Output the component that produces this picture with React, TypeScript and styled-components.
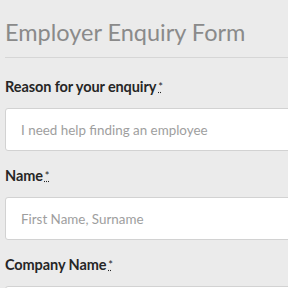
import styled, { createGlobalStyle } from 'styled-components';

const GlobalStyle = createGlobalStyle`
	html, body {
		margin: 0;
		padding: 0;
		background: #ebebeb;
		overflow: hidden;
	}

	body {
		font-family: Lato, "Open Sans", sans-serif;
	}
`;

const FormWrapper = styled.form`
	width: 320px;
	padding: 18px 0 0 5px;
`;

const Title = styled.h2`
	margin: 0;
	padding-bottom: 10px;
	font-size: 23.5px;
	font-weight: 400;
	line-height: 29px;
	color: #8a8a8a;
	border-bottom: 1px solid #d6d6d6;
`;

const Fields = styled.div`
	display: flex;
	flex-direction: column;
	padding-top: 20px;
`;

const Field = styled.div`
	display: flex;
	flex-direction: column;
	gap: 12px;
	margin-bottom: 16px;
`;

const Label = styled.label`
	font-size: 14.5px;
	font-weight: 700;
	line-height: 18px;
	color: #262626;
	letter-spacing: -0.1px;

	abbr {
		margin-left: 2px;
		font-weight: 400;
		font-size: 11px;
		vertical-align: top;
		text-decoration: underline dotted;
		cursor: help;
	}
`;

const Input = styled.input`
	box-sizing: border-box;
	height: 43px;
	width: 100%;
	padding: 0 15px;
	border: 1px solid #d2d2d2;
	border-radius: 3px;
	background: #fff;
	font-family: inherit;
	font-size: 13.4px;
	color: #333;

	&::placeholder {
		color: #9e9e9e;
	}
`;

const fields = [
	{ label: 'Reason for your enquiry', placeholder: 'I need help finding an employee' },
	{ label: 'Name', placeholder: 'First Name, Surname' },
	{ label: 'Company Name', placeholder: '' },
];

const App = () => {
	return (
		<>
			<GlobalStyle />
			<FormWrapper>
				<Title>Employer Enquiry Form</Title>
				<Fields>
					{fields.map((item, i) => (
						<Field key={i}>
							<Label>
								{item.label}
								<abbr title="required">*</abbr>
							</Label>
							<Input placeholder={item.placeholder} />
						</Field>
					))}
				</Fields>
			</FormWrapper>
		</>
	);
};

export default App;
